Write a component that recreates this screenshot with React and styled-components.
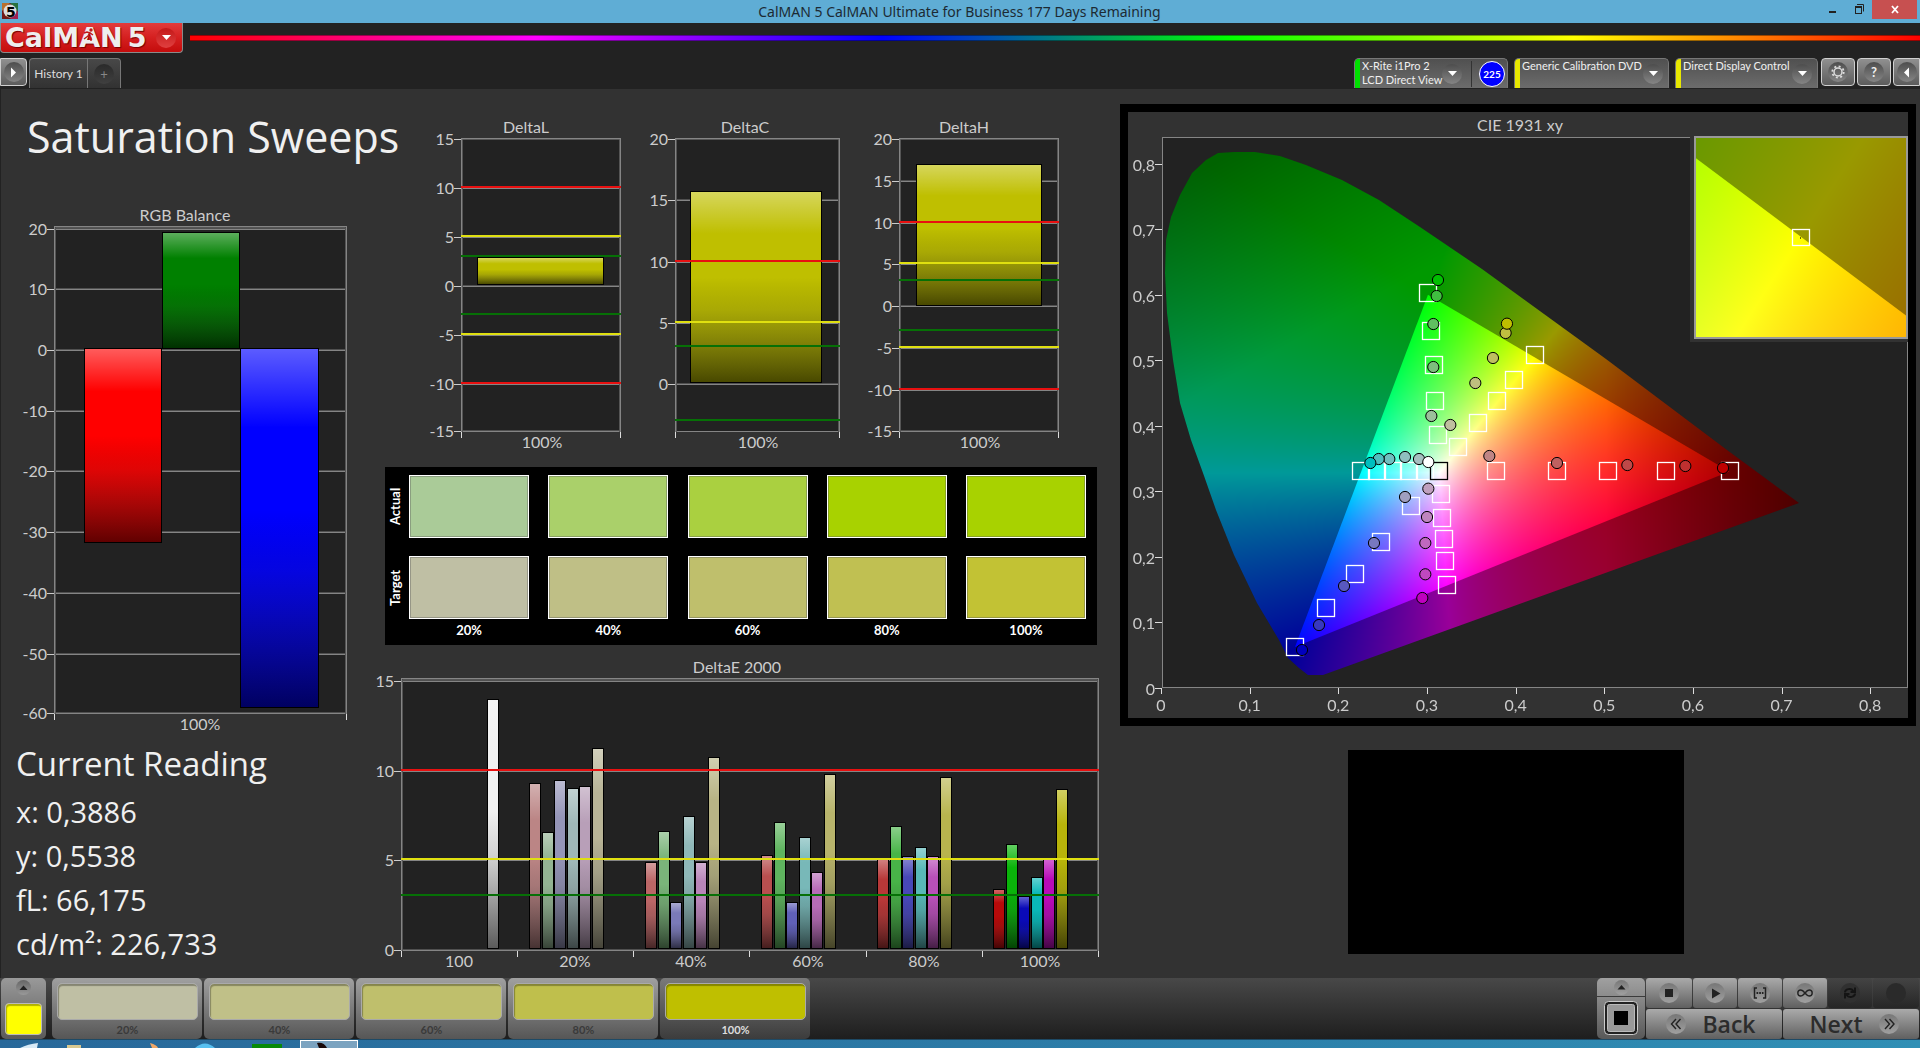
import { useEffect, useRef } from 'react';
import styled, { createGlobalStyle } from 'styled-components';

const GlobalStyle = createGlobalStyle`
  * {
    box-sizing: border-box;
  }
  body {
    margin: 0;
    background: #323232;
    color: #f0f0f0;
    font-family: Lato, 'Open Sans', sans-serif;
    font-size: 13px;
  }
  button {
    margin: 0;
    padding: 0;
    border: 0;
    color: inherit;
    font: inherit;
    cursor: pointer;
  }
`;

const Page = styled.div`
  display: flex;
  flex-direction: column;
  min-height: 100vh;
`;

/* window frame */

const TitleBar = styled.div`
  display: grid;
  grid-template-columns: 1fr auto 1fr;
  height: 23px;
  padding: 0 3px 0 2px;
  background: #5fadd5;
  color: #1c2a33;
  font-family: 'Noto Sans', sans-serif;
  font-size: 14px;
  line-height: 23px;
`;
const AppIcon = styled.svg`
  width: 16px;
  height: 16px;
  margin-top: 3px;
`;
const WindowButtons = styled.div`
  display: flex;
  justify-content: flex-end;
`;
const WindowButton = styled.button`
  width: ${(props) => (props.$close ? '45px' : '26px')};
  height: 19px;
  background: ${(props) => (props.$close ? '#c75050' : 'transparent')};
  svg {
    display: block;
    margin: 0 auto;
  }
`;

/* header */

const Header = styled.header`
  background: #222;
`;
const BrandRow = styled.div`
  display: flex;
  gap: 7px;
  height: 35px;
`;
const Brand = styled.div`
  position: relative;
  display: flex;
  align-items: center;
  gap: 5px;
  width: 183px;
  height: 30px;
  padding-left: 4px;
  border: 1px solid #8a8a8a;
  border-top: 0;
  border-radius: 0 0 4px 4px;
  background: linear-gradient(#e23c3c, #d52020 50%, #c40c0c);
`;
const BrandText = styled.span`
  color: #eee;
  font-family: 'DejaVu Sans', sans-serif;
  font-size: 27px;
  font-weight: bold;
  line-height: 28px;
  text-shadow: 1px 1px 1px #700;
`;
const Runner = styled.svg`
  position: absolute;
  top: 5px;
  left: 81px;
`;
const Rainbow = styled.div`
  flex: 1;
  height: 6px;
  margin-top: 12px;
  border-top: 1px solid rgba(0, 0, 0, 0.4);
  border-bottom: 1px solid rgba(0, 0, 0, 0.4);
  background: linear-gradient(90deg, #f00, #f0f 20%, #00f 40%, #0f0 60%, #ff0 80%, #f00);
`;
const TabRow = styled.div`
  display: flex;
  gap: 2px;
  height: 31px;
  overflow: hidden;
`;
const RoundIcon = styled.span`
  display: flex;
  align-items: center;
  justify-content: center;
  flex: none;
  width: ${(props) => props.$size || 20}px;
  height: ${(props) => props.$size || 20}px;
  border-radius: 50%;
  background: ${(props) => props.$fill || 'linear-gradient(#4d4d4d, #858585)'};
`;
const ToolButton = styled.button`
  display: flex;
  align-items: center;
  justify-content: center;
  width: ${(props) => props.$width || 34}px;
  height: 28px;
  border: 1px solid #d0d0d0;
  border-radius: ${(props) => props.$radius || '4px'};
  background: linear-gradient(#909090, #5c5c5c);
`;
const Tabs = styled.div`
  display: flex;
  height: 30px;
  border: 1px solid #777;
  border-bottom: 0;
  border-radius: 4px 4px 0 0;
  background: linear-gradient(#484848, #323232);
`;
const Tab = styled.button`
  width: 58px;
  border-right: 1px solid #777;
  background: none;
  color: #ddd;
  font-size: 12px;
`;
const AddTab = styled.button`
  display: flex;
  align-items: center;
  justify-content: center;
  width: 32px;
  background: none;
  color: #888;
`;
const Devices = styled.div`
  display: flex;
  gap: 6px;
  margin-left: auto;
  padding-right: 1px;
`;
const Device = styled.div`
  display: flex;
  align-items: center;
  width: ${(props) => props.$width}px;
  height: 30px;
  overflow: hidden;
  border: 1px solid #777;
  border-bottom: 0;
  border-radius: 5px 5px 0 0;
  background: linear-gradient(#505050, #6c6c6c);
`;
const DeviceLight = styled.span`
  flex: none;
  align-self: stretch;
  width: 5px;
  background: ${(props) => props.$color};
`;
const DeviceName = styled.span`
  flex: 1;
  align-self: stretch;
  min-width: 0;
  padding-left: 2px;
  color: #f0f0f0;
  font-size: 11px;
  line-height: 14px;
  white-space: pre;
`;
const DeviceMenu = styled.button`
  flex: none;
  margin: 0 ${(props) => props.$gap || 5}px 0 5px;
  background: none;
`;
const Count = styled.span`
  flex: none;
  width: 36px;
  height: 26px;
  padding: 0 2px 0 7px;
  border-left: 1px solid #333;
  b {
    display: block;
    width: 26px;
    border: 1px solid #fff;
    border-radius: 50%;
    background: #00f;
    color: #fff;
    font-size: 10px;
    line-height: 24px;
    text-align: center;
  }
`;
const HeaderButtons = styled.div`
  display: flex;
  gap: 2px;
`;

/* workspace */

const Workspace = styled.main`
  display: grid;
  grid-template-columns: minmax(0, 384fr) minmax(0, 728fr) minmax(0, 808fr);
  flex: 1;
  align-items: start;
  background: #323232;
  box-shadow: inset 1px 0 #222;
`;
const Title = styled.h1`
  height: 115px;
  margin: 0;
  padding: 20px 0 0 27px;
  color: #f0f0f0;
  font-family: 'Open Sans', sans-serif;
  font-size: 43px;
  font-weight: normal;
  line-height: 56px;
  white-space: nowrap;
`;
const Reading = styled.section`
  padding-left: 16px;
  font-family: 'Open Sans', sans-serif;
  font-size: 29px;
  line-height: 44px;
`;
const ReadingTitle = styled.h2`
  margin: 0 0 2px;
  font-size: 33px;
  font-weight: normal;
  line-height: 48px;
`;
const ReadingLine = styled.p`
  margin: 0;
`;
const Chart = styled.svg`
  display: block;
  width: 100%;
  overflow: visible;
  font-family: Lato, sans-serif;
  font-size: 16px;
  text {
    fill: #ccc;
  }
`;
const DeltaRow = styled.div`
  display: grid;
  grid-template-columns: 248fr 218fr 262fr;
`;
const SwatchPanel = styled.section`
  display: flex;
  flex-direction: column;
  gap: 18px;
  margin: 0 15px 0 1px;
  padding: 8px 11px 4px 2px;
  background: #000;
  color: #fff;
  font-size: 13px;
  font-weight: bold;
`;
const SwatchRow = styled.div`
  display: flex;
  gap: 6px;
`;
const SwatchHeading = styled.span`
  width: 16px;
  height: 63px;
  line-height: 16px;
  text-align: center;
  writing-mode: vertical-rl;
  transform: rotate(180deg);
`;
const SwatchCells = styled.div`
  display: grid;
  flex: 1;
  grid-template-columns: repeat(5, 120px);
  justify-content: space-between;
`;
const Swatch = styled.div`
  height: 63px;
  border: 1px solid #fff;
  background: ${(props) => props.$color};
  box-shadow: inset 0 0 0 1px rgba(90, 90, 90, 0.4);
`;
const SwatchLabels = styled(SwatchCells)`
  margin: -18px 0 0 22px;
`;
const SwatchLabel = styled.span`
  padding-top: 1px;
  line-height: 21px;
  text-align: center;
`;
const CiePanel = styled.section`
  margin: 15px 4px 24px 8px;
  border: 8px solid #000;
`;
const Preview = styled.div`
  width: 336px;
  height: 204px;
  margin: 0 auto;
  background: #000;
`;

/* bottom bar */

const Footer = styled.footer`
  display: flex;
  height: 61px;
  padding-left: 1px;
  background: linear-gradient(#484848, #1e1e1e);
`;
const CurrentColor = styled.button`
  display: flex;
  flex-direction: column;
  align-items: center;
  gap: 8px;
  width: 45px;
  margin-right: 6px;
  padding-top: 2px;
  border-radius: 5px;
  background: linear-gradient(#999, #5a5a5a);
`;
const ColorChip = styled.span`
  width: 37px;
  height: 32px;
  border: 1px solid #bbb;
  border-radius: 4px;
  background: #ff0;
  box-shadow: inset 1px 2px 1px rgba(0, 0, 0, 0.3);
`;
const Levels = styled.div`
  display: flex;
  gap: 2px;
`;
const Level = styled.button`
  width: 150px;
  padding: 5px 4px 0 5px;
  border-radius: 5px;
  background: ${(props) =>
    props.$active ? 'linear-gradient(#7a7a7a, #3c3c3c)' : 'linear-gradient(#a0a0a0, #565656)'};
  color: ${(props) => (props.$active ? '#ddd' : '#3a3a3a')};
  font-size: 11px;
  font-weight: bold;
  line-height: 19px;
`;
const LevelColor = styled.span`
  display: block;
  height: 37px;
  border: 1px solid #aaa;
  border-radius: 5px;
  background: ${(props) => props.$color};
  box-shadow: inset 1px 2px 1px rgba(0, 0, 0, 0.3);
`;
const Controls = styled.div`
  display: flex;
  gap: 1px;
  margin-left: auto;
  padding-right: 1px;
  color: #2c2c2c;
`;
const Pattern = styled.div`
  display: flex;
  flex-direction: column;
  gap: 1px;
  width: 48px;
`;
const PatternButton = styled.button`
  display: flex;
  align-items: center;
  justify-content: center;
  height: ${(props) => props.$height}px;
  border-radius: ${(props) => props.$radius};
  background: ${(props) => props.$fill};
`;
const ControlGrid = styled.div`
  display: grid;
  grid-template-columns: 46px repeat(4, 44px) 46px;
  grid-template-rows: 30px 30px;
  gap: 1px;
`;
const Control = styled.button`
  display: flex;
  align-items: center;
  justify-content: center;
  border-radius: 3px;
  background: ${(props) =>
    props.disabled ? 'linear-gradient(#444, #262626)' : 'linear-gradient(#aaa, #606060)'};
`;
const StepButton = styled(Control)`
  gap: 16px;
  grid-column: span 3;
  padding: ${(props) => (props.$next ? '0 0 0 6px' : '0 6px 0 0')};
  color: #2c2c2c;
  font-family: 'Open Sans', sans-serif;
  font-size: 23px;
  font-weight: 600;
  line-height: 30px;
`;
const Taskbar = styled.div`
  height: 9px;
  border-top: 1px solid #1d4a66;
  background: linear-gradient(90deg, #28689a, #2c7aa6 50%, #308fb5);
  svg {
    display: block;
  }
`;

const Arrow = ({ d = 'M2 4h9l-4.500 5z', color = '#fff' }) => (
  <svg width="13" height="13" aria-hidden="true">
    <path d={d} fill={color} />
  </svg>
);

/* bar charts */

const gray = '#858585';
const lineColors = { r: '#e81010', y: '#e0e010', g: '#067006' };

function BarChart({ title, titleX, width, height, plot, ticks, zero, unit, limits = [], bars, categories, marks }) {
  const [left, top, right, bottom] = plot;
  const yOf = (v) => Math.round(zero - v * unit);
  const id = title.replace(/\s/g, '');
  return (
    <Chart viewBox={`0 0 ${width} ${height}`} role="img" aria-label={title}>
      <defs>
        <linearGradient id={id} x1="0" y1="0" x2="0" y2="1">
          <stop offset="0" stopColor="#fff" stopOpacity=".36" />
          <stop offset=".22" stopColor="#fff" stopOpacity="0" />
          <stop offset=".45" stopColor="#000" stopOpacity="0" />
          <stop offset=".62" stopColor="#222" stopOpacity=".14" />
          <stop offset="1" stopColor="#000" stopOpacity=".62" />
        </linearGradient>
      </defs>
      <text x={titleX} y={top - 5} textAnchor="middle">{title}</text>
      <rect x={left} y={top} width={right - left} height={bottom - top} fill="#222" />
      {ticks.map((v) => {
        const y = Math.min(yOf(v), bottom - 1);
        return (
          <g key={v}>
            <rect x={left} y={y - 1} width={right - left} height="1" fill="#505050" />
            <rect x={left} y={y} width={right - left} height="1" fill={gray} />
            <rect x={left - 7} y={y} width="7" height="1" fill="#ccc" />
            <text x={left - 7} y={y + 6} textAnchor="end">{v}</text>
          </g>
        );
      })}
      {bars.map(([x, w, y1, y2, color], i) => (
        <g key={i}>
          <rect x={x} y={y1} width={w} height={y2 - y1} fill="#000" />
          <rect x={x + 1} y={y1 + 1} width={w - 2} height={y2 - y1 - 2} fill={color} />
          <rect x={x + 1} y={y1 + 1} width={w - 2} height={y2 - y1 - 2} fill={`url(#${id})`} />
        </g>
      ))}
      <rect x={left + 0.5} y={top + 0.5} width={right - left - 1} height={bottom - top - 1} fill="none" stroke={gray} />
      <path d={`M${left + 1.5} ${bottom}V${top + 1.5}H${right - 1.5}V${bottom}`} fill="none" stroke="#555" />
      {limits.map(([v, c]) => (
        <rect key={v} x={left} y={yOf(v) - 2} width={right - left} height="2" fill={lineColors[c]} />
      ))}
      {marks.map((x) => (
        <rect key={x} x={x} y={bottom} width="1" height="6" fill="#ddd" />
      ))}
      {categories.map(([label, x]) => (
        <text key={label} x={x} y={bottom + 16} textAnchor="middle">{label}</text>
      ))}
    </Chart>
  );
}

const deltaLimits = [[10, 'r'], [5, 'y'], [3, 'g'], [-3, 'g'], [-5, 'y'], [-10, 'r']];

// tops of the bars per level, in chart pixels: red, green, blue, cyan, magenta, yellow
const deltaE = [
  [[138, '#bb8585'], [187, '#93b493'], [135, '#9595b8'], [143, '#9fb8b8'], [141, '#b89fb8'], [103, '#b8b496']],
  [[217, '#bb6666'], [186, '#7ab47a'], [257, '#7a7ab8'], [171, '#8fb8b8'], [217, '#b885b8'], [112, '#b8b485']],
  [[210, '#b84f4f'], [177, '#5fb45f'], [257, '#6060b8'], [192, '#78b8b8'], [227, '#b86cb8'], [129, '#b8b46b']],
  [[214, '#b83838'], [181, '#48b448'], [211, '#4848b8'], [202, '#58b8b8'], [211, '#b850b8'], [132, '#b8b44e']],
  [[244, '#b80a0a'], [199, '#0ab40a'], [251, '#0a0ab8'], [232, '#0ab8b8'], [214, '#b80ab8'], [144, '#b8b40a']],
];
const deltaEBars = deltaE.flatMap((group, g) =>
  group.map(([top, color], i) => [Math.round(145 + g * 116 + i * 12.6), 12, top, 304, color])
);

/* chromaticity diagram */

const CIE = { left: 34, top: 25, right: 780, bottom: 575, sx: 886.5, sy: 654.7 };
const cieX = (x) => CIE.left + x * CIE.sx;
const cieY = (y) => CIE.bottom + 0.5 - y * CIE.sy;

const gamut = [[0.64, 0.33], [0.3, 0.6], [0.15, 0.062]];
const locusPoints = [
  [195, 563], [180, 563], [171, 556], [160, 546], [151, 528], [129, 491], [106, 443], [88, 398], [75, 361],
  [63, 328], [52, 291], [45, 248], [39, 201], [37, 161], [38, 128], [43, 105], [52, 83], [64, 61], [78, 48],
  [90, 41], [106, 40], [127, 40], [152, 44], [178, 53], [214, 68], [251, 88], [292, 115], [354, 157],
  [478, 247], [599, 338], [671, 391],
];

const targets = [
  [0.2993, 0.6026], [0.3027, 0.544], [0.3053, 0.4921], [0.3064, 0.4381], [0.3102, 0.3857],
  [0.4196, 0.5079], [0.3963, 0.4697], [0.3771, 0.4381], [0.3557, 0.404], [0.3331, 0.3679],
  [0.2237, 0.3307], [0.2418, 0.3307], [0.2594, 0.3307], [0.2771, 0.3307], [0.2959, 0.3307],
  [0.3756, 0.3307], [0.4444, 0.3307], [0.5024, 0.3307], [0.5678, 0.3307], [0.64, 0.3307],
  [0.314, 0.295], [0.3151, 0.2589], [0.3174, 0.2268], [0.3185, 0.1932], [0.3207, 0.1566],
  [0.2801, 0.2772], [0.2463, 0.2222], [0.2166, 0.1729], [0.1842, 0.1209], [0.1493, 0.0619],
];
const measured = [
  [0.3102, 0.6224, '#00bf00'], [0.3087, 0.598, '#40bf40'], [0.3049, 0.5552, '#60bf60'],
  [0.3049, 0.4895, '#7dbf7d'], [0.3027, 0.4147, '#9bbf9b'],
  [0.3865, 0.5415, '#bfbf40'], [0.388, 0.5557, '#bfbf00'], [0.3722, 0.5033, '#bfbf60'],
  [0.3523, 0.4651, '#bfbf7f'], [0.3241, 0.401, '#bfbf9f'],
  [0.2553, 0.349, '#70bfbf'], [0.2433, 0.349, '#50bfbf'], [0.2339, 0.3429, '#00bfbf'],
  [0.273, 0.3521, '#8fbfbf'], [0.2888, 0.349, '#a5bfbf'], [0.2993, 0.3444, '#fff'],
  [0.3681, 0.3536, '#bf8585'], [0.4444, 0.3429, '#bf6060'], [0.5238, 0.3398, '#bf4848'],
  [0.5892, 0.3383, '#bf3030'], [0.6317, 0.3353, '#bf0000'],
  [0.2993, 0.3037, '#bfa0bf'], [0.2978, 0.2604, '#bf85bf'], [0.2959, 0.2207, '#bf68bf'],
  [0.2959, 0.1729, '#bf48bf'], [0.2925, 0.1367, '#bf00bf'],
  [0.273, 0.291, '#9f9fbf'], [0.238, 0.2207, '#7878bf'], [0.2042, 0.155, '#5858bf'],
  [0.176, 0.0954, '#3838bf'], [0.1568, 0.0573, '#0000bf'],
];

const clamp = (v) => Math.max(0, Math.min(1, v));

function xyColor(x, y) {
  const X = x / y;
  const Z = (1 - x - y) / y;
  const rgb = [
    3.2406 * X - 1.5372 - 0.4986 * Z,
    -0.9689 * X + 1.8758 + 0.0415 * Z,
    0.0557 * X - 0.204 + 1.057 * Z,
  ];
  const max = Math.max(...rgb);
  const red = 1 - 0.5 * clamp((x - 0.5) / 0.22);
  const green = 1 - 0.35 * clamp(((y - 0.33) * 0.8 + (0.3 - x) * 0.6 - 0.25) / 0.27);
  return rgb.map((c) => 255 * Math.pow(clamp(c / max), 0.9) * red * green);
}

function tracePath(ctx, points) {
  ctx.beginPath();
  points.forEach(([x, y]) => ctx.lineTo(x, y));
  ctx.closePath();
}

// fills the canvas with chromaticities: dimmed everywhere, at full strength inside the gamut
function paint(canvas, toXY, toPixel, outline) {
  const { width, height } = canvas;
  const layer = (gain) => {
    const off = document.createElement('canvas');
    off.width = width;
    off.height = height;
    const octx = off.getContext('2d');
    const image = octx.createImageData(width, height);
    for (let j = 0; j < height; j++) {
      for (let i = 0; i < width; i++) {
        const [x, y] = toXY(i, j);
        const rgb = xyColor(x, Math.max(y, 0.005));
        const k = (j * width + i) * 4;
        for (let c = 0; c < 3; c++) image.data[k + c] = rgb[c] * gain;
        image.data[k + 3] = 255;
      }
    }
    octx.putImageData(image, 0, 0);
    return off;
  };
  const ctx = canvas.getContext('2d');
  ctx.clearRect(0, 0, width, height);
  ctx.save();
  if (outline) {
    tracePath(ctx, outline);
    ctx.clip();
  }
  ctx.drawImage(layer(0.6), 0, 0);
  ctx.restore();
  ctx.save();
  tracePath(ctx, gamut.map(toPixel));
  ctx.clip();
  ctx.drawImage(layer(1), 0, 0);
  ctx.restore();
}

const inset = { x: 568, y: 26, width: 210, height: 199, cx: 0.4196, cy: 0.505, px: 105, py: 99, sx: 3800, sy: 3580 };

function CieChart() {
  const fieldRef = useRef(null);
  const insetRef = useRef(null);

  useEffect(() => {
    paint(
      fieldRef.current,
      (i, j) => [(i - CIE.left) / CIE.sx, (CIE.bottom + 0.5 - j) / CIE.sy],
      ([x, y]) => [cieX(x), cieY(y)],
      locusPoints
    );
    paint(
      insetRef.current,
      (i, j) => [inset.cx + (i - inset.px) / inset.sx, inset.cy - (j - inset.py) / inset.sy],
      ([x, y]) => [inset.px + (x - inset.cx) * inset.sx, inset.py - (y - inset.cy) * inset.sy]
    );
  }, []);

  const steps = [0, 1, 2, 3, 4, 5, 6, 7, 8];
  const label = (n) => (n ? `0,${n}` : '0');
  return (
    <Chart viewBox="0 0 780 606" role="img" aria-label="CIE 1931 xy">
      <text x="392" y="19" textAnchor="middle">CIE 1931 xy</text>
      <rect x={CIE.left} y={CIE.top} width="746" height="551" fill="#222" />
      <foreignObject x="0" y="0" width="780" height="606">
        <canvas ref={fieldRef} width="780" height="606" />
      </foreignObject>
      <rect x="34.5" y="25.5" width="745" height="550" fill="none" stroke={gray} />
      {steps.map((n) => (
        <g key={n}>
          <rect x={Math.round(cieX(n / 10)) - 1} y="576" width="1" height="6" fill="#ddd" />
          <text x={cieX(n / 10) - 1} y="599" textAnchor="middle">{label(n)}</text>
          <rect x="27" y={Math.round(cieY(n / 10))} width="7" height="1" fill="#ddd" />
          <text x="27" y={Math.round(cieY(n / 10)) + 7} textAnchor="end">{label(n)}</text>
        </g>
      ))}
      {targets.map(([x, y]) => (
        <rect
          key={`${x}-${y}`}
          x={Math.round(cieX(x)) - 7.5}
          y={Math.round(cieY(y)) - 8.5}
          width="17"
          height="17"
          fill="none"
          stroke="#fff"
          strokeWidth="1.300"
        />
      ))}
      <rect x="302.5" y="350.5" width="17" height="17" fill="none" stroke="#000" strokeWidth="1.300" />
      {measured.map(([x, y, color]) => (
        <circle key={`${x}-${y}`} cx={cieX(x) + 1} cy={cieY(y)} r="5.600" fill={color} stroke="#000" />
      ))}
      <rect x="562" y="24" width="218" height="206" fill="#323232" />
      <rect x="566" y="24" width="214" height="203" fill="#999" />
      <foreignObject x={inset.x} y={inset.y} width={inset.width} height={inset.height}>
        <canvas ref={insetRef} width={inset.width} height={inset.height} />
      </foreignObject>
      <rect x="664.500" y="117.500" width="17" height="16" fill="none" stroke="#fff" strokeWidth="1.300" />
      <rect x="672" y="125" width="1" height="2" fill="#6a6a00" />
    </Chart>
  );
}

const levels = [
  { label: '20%', actual: '#aacb98', target: '#bfbfa4', color: '#bfbfa4' },
  { label: '40%', actual: '#aad06a', target: '#bfbf86', color: '#c0c088' },
  { label: '60%', actual: '#aad040', target: '#bfbf6c', color: '#bfbf6c' },
  { label: '80%', actual: '#a8d200', target: '#c0c052', color: '#bfbf4c' },
  { label: '100%', actual: '#a8d200', target: '#c2c234', color: '#bfbf00' },
];
const reading = ['x: 0,3886', 'y: 0,5538', 'fL: 66,175', 'cd/m²: 226,733'];
const roundFill = 'linear-gradient(#777, #a0a0a0)';

function DeviceBox({ name, color, width, menuGap, children }) {
  return (
    <Device $width={width}>
      <DeviceLight $color={color} />
      <DeviceName>{name}</DeviceName>
      <DeviceMenu $gap={menuGap} aria-label={`${name} menu`}>
        <RoundIcon>
          <Arrow />
        </RoundIcon>
      </DeviceMenu>
      {children}
    </Device>
  );
}

function Swatches({ name, field }) {
  return (
    <SwatchRow>
      <SwatchHeading>{name}</SwatchHeading>
      <SwatchCells>
        {levels.map((level) => (
          <Swatch key={level.label} $color={level[field]} />
        ))}
      </SwatchCells>
    </SwatchRow>
  );
}

function App() {
  return (
    <Page>
      <GlobalStyle />
      <TitleBar>
        <AppIcon viewBox="0 0 16 16">
          <rect width="16" height="16" fill="#701818" />
          <path d="M0 0h8L0 8z" fill="#b87030" />
          <path d="M16 0v9L8 0z" fill="#287040" />
          <path d="M16 16V8l-8 8z" fill="#a02050" />
          <circle cx="8" cy="8" r="6.500" fill="#ddd" />
          <text x="4" y="14" fontFamily="DejaVu Sans" fontWeight="bold" fontSize="14" fill="#000">5</text>
        </AppIcon>
        <span>CalMAN 5 CalMAN Ultimate for Business 177 Days Remaining</span>
        <WindowButtons>
          <WindowButton aria-label="Minimize">
            <svg width="16" height="19">
              <rect x="4" y="11" width="7" height="2" fill="#222" />
            </svg>
          </WindowButton>
          <WindowButton aria-label="Restore">
            <svg width="16" height="19">
              <path d="M6 4.500h6.500v7" fill="none" stroke="#222" />
              <rect x="4.500" y="6.500" width="6" height="7" fill="none" stroke="#222" />
              <path d="M4 7h7" stroke="#222" strokeWidth="2" />
            </svg>
          </WindowButton>
          <WindowButton $close aria-label="Close">
            <svg width="16" height="19">
              <path d="M5 6l6 7M11 6l-6 7" stroke="#fff" strokeWidth="1.800" />
            </svg>
          </WindowButton>
        </WindowButtons>
      </TitleBar>

      <Header>
        <BrandRow>
          <Brand>
            <BrandText>CalMAN</BrandText>
            <BrandText>5</BrandText>
            <Runner width="14" height="14" aria-hidden="true">
              <circle cx="9" cy="2" r="1.700" fill="#c01818" />
              <path d="M8 4L6 8l3 2v3M6 8l-4 3M2 5l3-1 3 1 3 2" fill="none" stroke="#c01818" strokeWidth="1.400" />
            </Runner>
            <DeviceMenu aria-label="Main menu">
              <RoundIcon $fill="linear-gradient(#c41818, #e04040)">
                <Arrow />
              </RoundIcon>
            </DeviceMenu>
          </Brand>
          <Rainbow />
        </BrandRow>
        <TabRow>
          <ToolButton $width={27} $radius="0 4px 4px 0" aria-label="Expand">
            <RoundIcon>
              <Arrow d="M4 1.500v10l5-5z" />
            </RoundIcon>
          </ToolButton>
          <Tabs>
            <Tab>History 1</Tab>
            <AddTab aria-label="Add tab">
              <RoundIcon $fill="linear-gradient(#2a2a2a, #404040)">+</RoundIcon>
            </AddTab>
          </Tabs>
          <Devices>
            <DeviceBox name={'X-Rite i1Pro 2\nLCD Direct View'} color="#00e000" width={154} menuGap={9}>
              <Count>
                <b>225</b>
              </Count>
            </DeviceBox>
            <DeviceBox name="Generic Calibration DVD" color="#e8e800" width={155} />
            <DeviceBox name="Direct Display Control" color="#e8e800" width={143} />
          </Devices>
          <HeaderButtons>
            <ToolButton aria-label="Settings">
              <RoundIcon>
                <svg width="14" height="14" viewBox="0 0 14 14">
                  <circle cx="7" cy="7" r="4" fill="none" stroke="#ddd" strokeWidth="1.500" />
                  <circle cx="7" cy="7" r="5.700" fill="none" stroke="#ddd" strokeWidth="1.800" strokeDasharray="2 2.470" />
                </svg>
              </RoundIcon>
            </ToolButton>
            <ToolButton aria-label="Help">
              <RoundIcon>
                <b>?</b>
              </RoundIcon>
            </ToolButton>
            <ToolButton $width={27} $radius="4px 0 0 4px" aria-label="Collapse">
              <RoundIcon>
                <Arrow d="M9 1.500v10l-5-5z" />
              </RoundIcon>
            </ToolButton>
          </HeaderButtons>
        </TabRow>
      </Header>

      <Workspace>
        <section>
          <Title>Saturation Sweeps</Title>
          <BarChart
            title="RGB Balance"
            titleX={185}
            width={384}
            height={536}
            plot={[54, 22, 347, 510]}
            ticks={[20, 10, 0, -10, -20, -30, -40, -50, -60]}
            zero={146}
            unit={6.07}
            bars={[
              [84, 78, 144, 339, '#f00'],
              [162, 78, 28, 145, '#008000'],
              [240, 79, 144, 504, '#00f'],
            ]}
            categories={[['100%', 200]]}
            marks={[54, 346]}
          />
          <Reading>
            <ReadingTitle>Current Reading</ReadingTitle>
            {reading.map((line) => (
              <ReadingLine key={line}>{line}</ReadingLine>
            ))}
          </Reading>
        </section>

        <section>
          <DeltaRow>
            <BarChart
              title="DeltaL"
              titleX={142}
              width={248}
              height={378}
              plot={[77, 49, 237, 343]}
              ticks={[15, 10, 5, 0, -5, -10, -15]}
              zero={197}
              unit={9.8}
              limits={deltaLimits}
              bars={[[93, 127, 168, 196, '#bfbf00']]}
              categories={[['100%', 158]]}
              marks={[77, 236]}
            />
            <BarChart
              title="DeltaC"
              titleX={113}
              width={218}
              height={378}
              plot={[43, 49, 208, 343]}
              ticks={[20, 15, 10, 5, 0]}
              zero={295}
              unit={12.25}
              limits={deltaLimits.slice(0, 4)}
              bars={[[58, 132, 102, 294, '#bfbf00']]}
              categories={[['100%', 126]]}
              marks={[43, 207]}
            />
            <BarChart
              title="DeltaH"
              titleX={114}
              width={262}
              height={378}
              plot={[49, 49, 209, 343]}
              ticks={[20, 15, 10, 5, 0, -5, -10, -15]}
              zero={217}
              unit={8.35}
              limits={deltaLimits}
              bars={[[66, 126, 75, 217, '#bfbf00']]}
              categories={[['100%', 130]]}
              marks={[49, 208]}
            />
          </DeltaRow>

          <SwatchPanel>
            <Swatches name="Actual" field="actual" />
            <Swatches name="Target" field="target" />
            <SwatchLabels>
              {levels.map((level) => (
                <SwatchLabel key={level.label}>{level.label}</SwatchLabel>
              ))}
            </SwatchLabels>
          </SwatchPanel>

          <BarChart
            title="DeltaE 2000"
            titleX={353}
            width={728}
            height={332}
            plot={[17, 33, 715, 306]}
            ticks={[15, 10, 5, 0]}
            zero={305}
            unit={17.95}
            limits={[[10, 'r'], [5, 'y'], [3, 'g']]}
            bars={[[103, 12, 54, 304, '#f0f0f0'], ...deltaEBars]}
            categories={[['100', 75], ['20%', 191], ['40%', 307], ['60%', 424], ['80%', 540], ['100%', 656]]}
            marks={[17, 133, 249, 365, 482, 598, 714]}
          />
        </section>

        <section>
          <CiePanel>
            <CieChart />
          </CiePanel>
          <Preview />
        </section>
      </Workspace>

      <Footer>
        <CurrentColor aria-label="Current color">
          <RoundIcon $size={15} $fill="linear-gradient(#666, #999)">
            <Arrow d="M2.500 9h8l-4-4.500z" color="#222" />
          </RoundIcon>
          <ColorChip />
        </CurrentColor>
        <Levels>
          {levels.map((level, i) => (
            <Level key={level.label} $active={i === 4}>
              <LevelColor $color={level.color} />
              {level.label}
            </Level>
          ))}
        </Levels>
        <Controls>
          <Pattern>
            <PatternButton $height={18} $radius="5px 5px 0 0" $fill="linear-gradient(#a0a0a0, #8c8c8c)" aria-label="Show patterns">
              <RoundIcon $size={15} $fill={roundFill}>
                <Arrow d="M2.500 8.500h8l-4-4.500z" color="#222" />
              </RoundIcon>
            </PatternButton>
            <PatternButton $height={42} $radius="0 0 5px 5px" $fill="linear-gradient(#8a8a8a, #585858)" aria-label="Pattern window">
              <svg width="34" height="34">
                <rect x=".5" y=".5" width="33" height="33" rx="4" fill="#222" stroke="#ccc" />
                <rect x="3.500" y="3.500" width="27" height="27" rx="2" fill="#999" stroke="#bbb" />
                <rect x="10" y="10" width="14" height="14" fill="#000" />
              </svg>
            </PatternButton>
          </Pattern>
          <ControlGrid>
            <Control aria-label="Stop">
              <RoundIcon $fill={roundFill}>
                <svg width="20" height="20">
                  <rect x="6" y="6" width="8" height="8" fill="#222" />
                </svg>
              </RoundIcon>
            </Control>
            <Control aria-label="Play">
              <RoundIcon $fill={roundFill}>
                <svg width="20" height="20">
                  <path d="M7 5.500v10l8.500-5z" fill="#222" />
                </svg>
              </RoundIcon>
            </Control>
            <Control aria-label="Read series">
              <RoundIcon $fill={roundFill}>
                <svg width="20" height="20">
                  <path d="M7 5H4.500v10H7M13 5h2.500v10H13" fill="none" stroke="#222" strokeWidth="1.500" />
                  <path d="M6.500 10h7" stroke="#222" strokeWidth="2" strokeDasharray="1.700 1" />
                </svg>
              </RoundIcon>
            </Control>
            <Control aria-label="Read continuously">
              <RoundIcon $fill={roundFill}>
                <svg width="20" height="20">
                  <path
                    d="M10 10C8 7.500 7 7 5.800 7a3 3 0 0 0 0 6C7 13 8 12.500 10 10s3-3 4.200-3a3 3 0 0 1 0 6C13 13 12 12.500 10 10z"
                    fill="none"
                    stroke="#222"
                    strokeWidth="1.400"
                  />
                </svg>
              </RoundIcon>
            </Control>
            <Control disabled aria-label="Refresh">
              <RoundIcon $fill="#303030">
                <svg width="20" height="20">
                  <path
                    d="M5 9.500C5 6 11 4.500 13.500 8M15 4.500V9h-4.500M15 10.500c0 3.500-6 5-8.500 1.500M5 15.500V11h4.500"
                    fill="none"
                    stroke="#141414"
                    strokeWidth="2"
                  />
                </svg>
              </RoundIcon>
            </Control>
            <Control disabled aria-label="Record">
              <RoundIcon $fill="#2a2a2a" />
            </Control>
            <StepButton>
              <RoundIcon $fill={roundFill}>
                <svg width="20" height="20">
                  <path d="M10 5l-4.500 5 4.500 5M14.500 5L10 10l4.500 5" fill="none" stroke="#222" strokeWidth="1.400" />
                </svg>
              </RoundIcon>
              Back
            </StepButton>
            <StepButton $next>
              Next
              <RoundIcon $fill={roundFill}>
                <svg width="20" height="20">
                  <path d="M6 5l4.500 5L6 15M10.500 5l4.500 5-4.500 5" fill="none" stroke="#222" strokeWidth="1.400" />
                </svg>
              </RoundIcon>
            </StepButton>
          </ControlGrid>
        </Controls>
      </Footer>

      <Taskbar>
        <svg width="400" height="8" aria-hidden="true">
          <path d="M20 8q8-4 18-5l-1 5z" fill="#d8eaf6" />
          <rect x="67" y="5" width="14" height="3" fill="#d8c890" />
          <path d="M150 3q7 2 8 5h-6z" fill="#f0a868" />
          <path d="M195 8q10-9 20 0z" fill="#58c0f0" />
          <rect x="252" y="4" width="30" height="4" fill="#088a08" />
          <rect x="300.500" y=".5" width="57" height="9" fill="#7ba3c0" stroke="#fff" />
          <path d="M317 3q7-1 10 5h-8z" fill="#180808" />
        </svg>
      </Taskbar>
    </Page>
  );
}

export default App;
